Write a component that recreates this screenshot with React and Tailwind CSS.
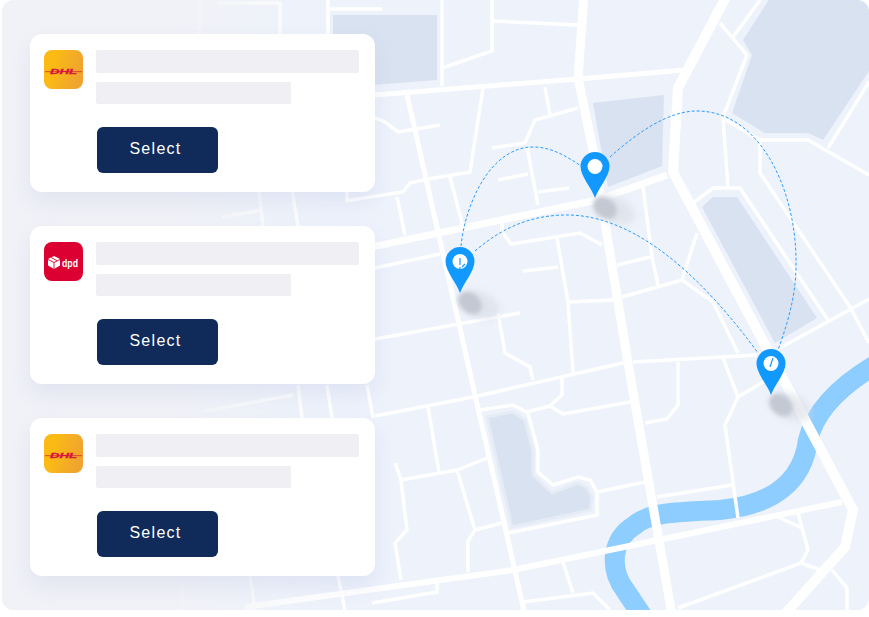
const bigRoads = [
  ['M584 -5L578 78L593 150L628 363L672 615', 9],
  ['M727 -5L678 88L673 172L853 510L845 547L784 615', 10],
];

const midRoads = [
  ['M375 95L578 79L685 70', 5],
  ['M300 262L597 200L667 175', 7],
  ['M245 607L513 570L842 502', 6],
  ['M407 95L525 615', 5],
];

const thinRoads = [
  'M442 -5V86',
  'M492 -5V51L442 68',
  'M492 21L578 25',
  'M760 0L733 37',
  'M720 23L747 55L723 117L728 188',
  'M723 118L760 140H808L869 175',
  'M828 148L869 82',
  'M760 140V173L850 307L869 343',
  'M780 348L869 299',
  'M693 203L713 188H740L828 320',
  'M633 362L757 355',
  'M483 88L470 172L423 180L410 183L403 192L345 201',
  'M450 177L463 227',
  'M397 197L405 235',
  'M375 118L385 122L398 132L440 125',
  'M492 148L525 143L535 120L578 108',
  'M545 87L550 115',
  'M527 147L538 205',
  'M498 180L528 174',
  'M538 192L569 188',
  'M502 222V232L511 244L580 233L602 245',
  'M557 238L568 302L573 373',
  'M568 302L613 300',
  'M523 271L558 267',
  'M617 265L650 257',
  'M643 187L652 257L658 285',
  'M622 297L682 280L697 233',
  'M682 280L713 302L738 353',
  'M375 268L440 254',
  'M375 339L520 313',
  'M205 411L293 395',
  'M375 416L473 397L623 363',
  'M498 313L505 353L530 367L533 380',
  'M562 378V395L550 406L527 412',
  'M550 406L563 414L630 402',
  'M480 410L513 405L528 413L538 450V472L553 485L578 477L590 480L597 492V515L508 533',
  'M597 492L645 482',
  'M428 407L439 472',
  'M395 463L401 480L407 530L395 543L401 580',
  'M401 480L457 470L487 458',
  'M457 470L475 530L468 541V572',
  'M475 530L502 523',
  'M372 603L437 592V582',
  'M563 562L573 593',
  'M523 602L593 593L610 610',
  'M657 497L732 485',
  'M645 423L667 419L678 405V362',
  'M723 358L738 397L725 425L738 518',
  'M738 397L763 382',
  'M778 517L802 528',
  'M798 513L808 550L801 563L678 608',
  'M801 563L820 570',
  'M832 570L847 588V615',
  'M199 -5V34',
  'M217 3H280V34',
  'M328 -5V34',
  'M328 9H382',
  'M259 190L263 226',
  'M292 190L298 226',
  'M222 217L263 210',
  'M347 190V201',
  'M298 385L302 418',
  'M327 385L332 418',
  'M367 385L373 418',
  'M182 576V610',
  'M250 576L255 610',
  'M338 576L345 610',
];

const parks = [
  'M333 15H437V80L333 88Z',
  'M593 103L664 95L662 166L608 187Z',
  'M772 -5H875V62L823 140L808 133H765L732 113L752 55L743 40Z',
  'M702 207L713 197H737L817 318L775 343Z',
];

const arcs = [
  'M461 246C465 205 490 147 533 147C550 147 565 155 581 166',
  'M610 157C640 130 670 111 697 111C760 111 797 190 796 265C796 300 785 330 778 350',
  'M475 251C505 225 535 215 567 215C625 215 690 260 758 353',
];

function Pin({ x, y, ticks }) {
  return (
    <g transform={`translate(${x} ${y})`}>
      <path d="M0 46C-3 37-14.500 24-14.500 14.500A14.500 14.500 0 0 1 14.500 14.500C14.500 24 3 37 0 46Z" fill="#1299ff" />
      <circle cx="0" cy="14.500" r="7.500" fill="#fff" />
      {ticks && <path d={ticks} fill="none" stroke="#1299ff" strokeWidth="1.200" />}
    </g>
  );
}

function PinShadow({ x, y }) {
  return (
    <g>
      <ellipse cx={x + 20} cy={y + 12} rx="21" ry="13" transform={`rotate(25 ${x + 20} ${y + 12})`} fill="#d8dce5" opacity="0.6" filter="url(#blur-wide)" />
      <ellipse cx={x + 10} cy={y + 10} rx="13" ry="10" transform={`rotate(40 ${x + 10} ${y + 10})`} fill="#c3c8d2" filter="url(#blur-tight)" />
    </g>
  );
}

function MapDrawing() {
  return (
    <svg className="absolute inset-0 w-full h-full" viewBox="2 0 867 610" fill="none">
      <defs>
        <filter id="blur-tight" x="-50%" y="-50%" width="200%" height="200%">
          <feGaussianBlur stdDeviation="2" />
        </filter>
        <filter id="blur-wide" x="-50%" y="-50%" width="200%" height="200%">
          <feGaussianBlur stdDeviation="3.500" />
        </filter>
      </defs>

      <path d="M880 362C840 385 815 410 808 440C803 480 775 505 720 510C680 512 650 512 635 525C610 540 610 570 625 590L645 620" stroke="#8ecdff" strokeWidth="20" />

      {parks.map((d) => (
        <path key={d} d={d} fill="#d9e2f0" />
      ))}
      <path
        d="M487 417L513 412L525 420L533 452V475L552 493L578 483L587 488L592 497L590 510L512 527Z"
        fill="#d9e2f0"
        stroke="#e6ecf6"
        strokeWidth="3"
      />

      <g stroke="#fff">
        {thinRoads.map((d) => (
          <path key={d} d={d} strokeWidth="3.500" />
        ))}
        {midRoads.map(([d, w]) => (
          <path key={d} d={d} strokeWidth={w} />
        ))}
        {bigRoads.map(([d, w]) => (
          <path key={d} d={d} strokeWidth={w} />
        ))}
      </g>

      <PinShadow x={595} y={198} />
      <PinShadow x={460} y={293} />
      <PinShadow x={771} y={395} />

      {arcs.map((d) => (
        <path key={d} d={d} stroke="#2b9cff" strokeWidth="1" strokeDasharray="3 2" />
      ))}

      <Pin x={595} y={152} />
      <Pin x={460} y={247} ticks="M0 11V18M0 20V22M2 20L5 17" />
      <Pin x={771} y={349} ticks="M2 9L-1 18" />
    </svg>
  );
}

function DhlLogo() {
  return (
    <svg className="block" width="39" height="39" viewBox="0 0 39 39">
      <defs>
        <linearGradient id="dhl-bg" x1="0" y1="0" x2="1" y2="0.300">
          <stop offset="0.300" stopColor="#fbbb14" />
          <stop offset="1" stopColor="#f0a42e" />
        </linearGradient>
      </defs>
      <rect width="39" height="39" rx="8" fill="url(#dhl-bg)" />
      <path d="M1 21.700H38" stroke="#e2232f" strokeWidth="0.800" />
      <text
        x="19.500"
        y="23.500"
        textAnchor="middle"
        textLength="27"
        lengthAdjust="spacingAndGlyphs"
        fontFamily="'Liberation Sans', sans-serif"
        fontSize="8"
        fontWeight="700"
        fontStyle="italic"
        fill="#d9123f"
        stroke="#d9123f"
        strokeWidth="0.300"
      >
        DHL
      </text>
    </svg>
  );
}

function DpdLogo() {
  return (
    <svg className="block" width="39" height="39" viewBox="0 0 39 39">
      <rect width="39" height="39" rx="8" fill="#dc0032" />
      <path d="M4 17L10 14L16 17V23.500L10 27L4 23.500Z" fill="#fff" />
      <path d="M4 17.500L10 20.500V27M10 20.500L16 17.500M7 15.500L13 18.700" stroke="#dc0032" strokeWidth="0.900" fill="none" />
      <text x="18" y="24.500" fontFamily="'Liberation Sans', sans-serif" fontSize="10" fontWeight="700" textLength="16" lengthAdjust="spacingAndGlyphs" fill="#fff">
        dpd
      </text>
    </svg>
  );
}

function CarrierCard({ logo }) {
  return (
    <div className="w-[345px] h-[158px] rounded-xl bg-white flex gap-[13px] pl-[14px] pt-4 shadow-[0_10px_20px_rgba(176,184,220,0.24)]">
      <div className="w-[39px] shrink-0">{logo}</div>
      <div className="w-[263px]">
        <div className="h-[23px] rounded-[2px] bg-[#f0f0f4]" />
        <div className="mt-[9px] h-[22px] w-[195px] rounded-[2px] bg-[#f0f0f4]" />
        <button className="mt-[23px] ml-px w-[121px] h-[46px] rounded-md bg-[#102a5a] text-white text-[16px] tracking-[0.08em] pr-1 pb-0.5 font-['Liberation_Sans',sans-serif]">
          Select
        </button>
      </div>
    </div>
  );
}

export default function App() {
  return (
    <div className="relative w-[869px] h-[617px] bg-white overflow-hidden">
      <div className="absolute left-[2px] top-0 w-[867px] h-[610px] rounded-xl overflow-hidden bg-[#edf2fb]">
        <MapDrawing />
        <div className="absolute inset-y-0 left-0 w-[380px] bg-gradient-to-r from-[#f1f2f7] from-[45%] to-transparent to-[87%]" />
      </div>
      <div className="relative flex flex-col gap-[34px] pl-[30px] pt-[34px]">
        <CarrierCard logo={<DhlLogo />} />
        <CarrierCard logo={<DpdLogo />} />
        <CarrierCard logo={<DhlLogo />} />
      </div>
    </div>
  );
}
